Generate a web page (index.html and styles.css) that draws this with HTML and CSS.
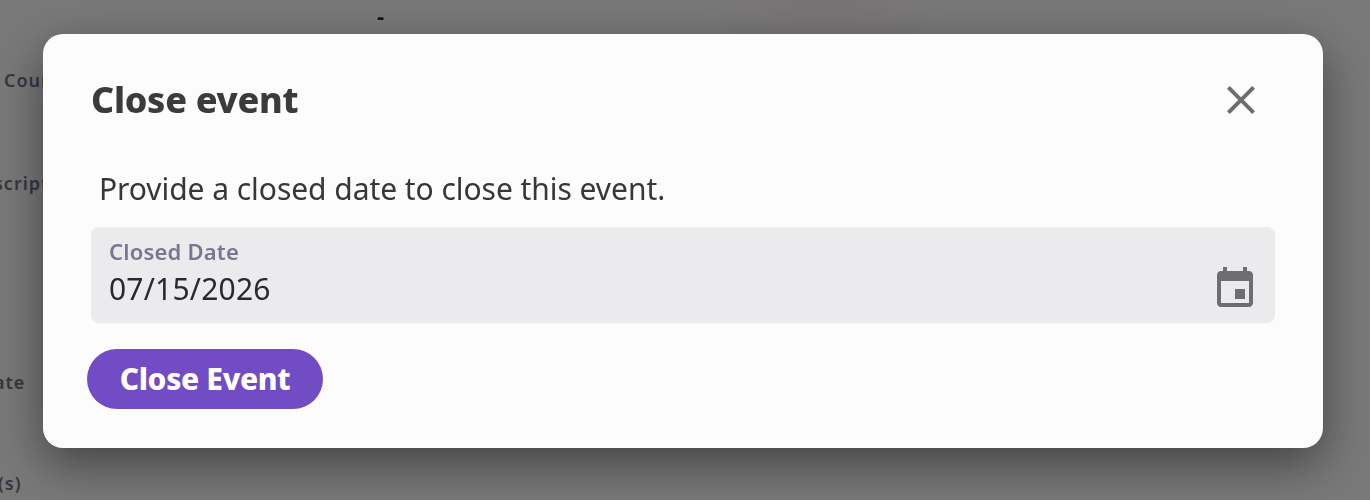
FILE: index.html
```html
<!DOCTYPE html>
<html lang="en">
<head>
<meta charset="utf-8">
<title>Close event</title>
<link rel="stylesheet" href="styles.css">
</head>
<body>
<main class="page">
  <div class="dash">-</div>
  <div class="label label-course">Course</div>
  <div class="label label-desc">script</div>
  <div class="label label-date">ate</div>
  <div class="label label-s">(s)</div>
</main>
<div class="backdrop">
  <section class="modal">
    <header class="modal-head">
      <h2 class="modal-title">Close event</h2>
      <button class="icon-btn" aria-label="Close">
        <svg class="close-icon" viewBox="0 0 24 24"><path d="M19 6.41 17.59 5 12 10.59 6.41 5 5 6.41 10.59 12 5 17.59 6.41 19 12 13.41 17.59 19 19 17.59 13.41 12z"/></svg>
      </button>
    </header>
    <p class="modal-text">Provide a closed date to close this event.</p>
    <div class="field">
      <div class="field-body">
        <span class="field-label">Closed Date</span>
        <span class="field-value">07/15/2026</span>
      </div>
      <svg class="cal-icon" viewBox="0 0 24 24"><path d="M17 12h-5v5h5v-5zM16 1v2H8V1H6v2H5c-1.11 0-1.99.9-1.99 2L3 19c0 1.1.89 2 2 2h14c1.1 0 2-.9 2-2V5c0-1.1-.9-2-2-2h-1V1h-2zm3 18H5V8h14v11z"/></svg>
    </div>
    <button class="primary">Close Event</button>
  </section>
</div>
</body>
</html>
```

FILE: styles.css
```css
* { box-sizing: border-box; }
html, body { margin: 0; height: 100%; overflow: hidden; }
body { font-family: "Noto Sans", "Open Sans", sans-serif; background: #fff; }

.page { height: 500px; display: flex; flex-direction: column; overflow: hidden; background: radial-gradient(130px 60px at 825px 0, #fff2f2, transparent); }
.dash { margin-left: 377px; height: 34px; padding-top: 1px; font-size: 22px; line-height: 28px; font-weight: 700; color: #000; }
.label { font-size: 18px; font-weight: 600; line-height: 20px; letter-spacing: 1px; color: #5c5a70; white-space: nowrap; }
.label-course { margin-top: 36px; margin-left: 4px; }
.label-desc { margin-top: 83px; margin-left: -6px; }
.label-date { margin-top: 179px; margin-left: -6px; }
.label-s { margin-top: 81px; margin-left: -2px; }

.backdrop { position: fixed; inset: 0; background: rgba(32, 32, 34, .6); }
.modal { position: absolute; left: 43px; top: 34px; width: 1280px; height: 414px; padding: 42px 48px 0; background: #fcfcfc; border-radius: 20px; box-shadow: 0 16px 48px rgba(0, 0, 0, .45); display: flex; flex-direction: column; align-items: flex-start; }
.modal-head { width: 100%; height: 48px; display: flex; align-items: center; justify-content: space-between; }
.modal-title { margin: 0; font-size: 36px; line-height: 48px; font-weight: 800; letter-spacing: -.3px; color: #3b3b3e; }
.icon-btn { width: 48px; height: 48px; margin-right: 10px; padding: 0; border: 0; background: none; display: flex; align-items: center; justify-content: center; }
.close-icon { width: 48px; height: 48px; fill: #6e6e70; }
.modal-text { margin: 46px 0 0 8px; font-size: 30px; line-height: 38px; letter-spacing: -.05px; color: #37373a; }
.field { width: 1184px; height: 96px; margin-top: 19px; padding: 11px 16px 0 18px; background: #ebebee; border-radius: 8px; display: flex; justify-content: space-between; align-items: flex-start; }
.field-body { display: flex; flex-direction: column; }
.field-label { font-size: 22px; line-height: 26px; font-weight: 600; letter-spacing: .2px; color: #7a7590; }
.field-value { margin-top: 5px; font-size: 30px; line-height: 40px; letter-spacing: .2px; color: #2a2a2c; }
.cal-icon { width: 48px; height: 48px; margin-top: 27px; fill: #6e6e70; }
.primary { margin: 26px 0 0 -4px; width: 236px; height: 60px; padding: 0 0 2px; border: 0; border-radius: 30px; background: #724cc4; color: #fff; font-family: inherit; font-size: 30px; font-weight: 800; letter-spacing: -.35px; }
```
